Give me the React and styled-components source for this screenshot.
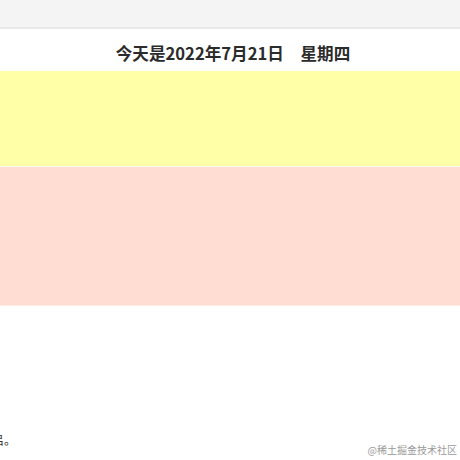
import React from "react";
import styled, { createGlobalStyle } from "styled-components";

const Global = createGlobalStyle`
  html, body { margin: 0; padding: 0; background: #ffffff; }
  body { font-family: "Noto Sans CJK SC", "Noto Sans", sans-serif; }
`;

const Page = styled.div`
  width: 460px;
  height: 460px;
  overflow: hidden;
  display: flex;
  flex-direction: column;
  position: relative;
`;

const TopBar = styled.div`
  height: 27px;
  background: #f4f4f4;
  border-bottom: 2px solid #e9e9e9;
  flex-shrink: 0;
`;

const Title = styled.h1`
  margin: 0;
  height: 42px;
  display: flex;
  align-items: center;
  justify-content: center;
  padding: 5px 0 0 6px;
  box-sizing: border-box;
  font-size: 16.6px;
  line-height: 20px;
  font-weight: 700;
  color: #2b2b2b;
  white-space: pre;
  font-family: "Noto Sans CJK SC", sans-serif;
`;

const Band = styled.div`
  height: ${(p) => p.$h}px;
  background: ${(p) => p.$bg};
  border-bottom: 1px solid ${(p) => p.$line};
  flex-shrink: 0;
`;

const Note = styled.p`
  margin: 126px 0 0 -8px;
  font-size: 12px;
  line-height: 16px;
  color: #333;
  font-family: "Noto Sans CJK SC", sans-serif;
`;

const Watermark = styled.div`
  position: absolute;
  right: 3px;
  bottom: 3px;
  font-size: 10px;
  color: #9a9a9a;
  font-family: "Noto Sans CJK SC", serif;
`;

export default function App() {
  return (
    <Page>
      <Global />
      <TopBar />
      <Title>今天是2022年7月21日　星期四</Title>
      <Band $h={95} $bg="#ffffa8" $line="#fafaf0" />
      <Band $h={138} $bg="#ffddd3" $line="#fbeee9" />
      <Note>吕。</Note>
      <Watermark>@稀土掘金技术社区</Watermark>
    </Page>
  );
}
